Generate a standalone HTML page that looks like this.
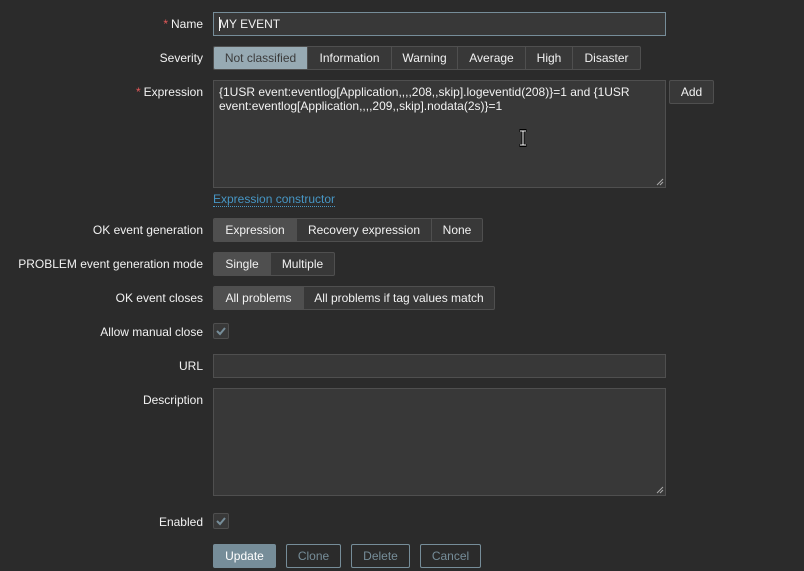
<!DOCTYPE html>
<html><head><meta charset="utf-8"><style>
*{box-sizing:border-box;margin:0;padding:0}
body{width:804px;height:571px;background:#2b2b2b;font-family:"Liberation Sans",Arial,sans-serif;font-size:12px;color:#f2f2f2;position:relative;overflow:hidden}
.l{position:absolute;right:601px;text-align:right;white-space:nowrap;line-height:14px}
.l .s{color:#e45959;margin-right:3px}
.in{position:absolute;left:213px;width:453px;background:#383838;border:1px solid #4f4f4f}
.seg{position:absolute;left:213px;height:24px;display:flex;border:1px solid #4f4f4f;border-radius:2px;background:#383838;overflow:hidden}
.seg div{height:22px;line-height:22px;text-align:center;border-left:1px solid #4f4f4f;color:#f2f2f2}
.seg div:first-child{border-left:none}
.seg .on{background:#4f4f4f}
.cb{position:absolute;left:213px;width:16px;height:16px;border:1px solid #4f4f4f;border-radius:2px;background:#383838}
.btn{position:absolute;top:544px;height:24px;line-height:22px;text-align:center;border:1px solid #768d99;border-radius:2px;color:#768d99}
</style></head><body>
<div class="l" style="top:17px"><span class="s">*</span>Name</div>
<div class="in" style="top:12px;height:24px;border-color:#768d99;padding-left:5px;line-height:22px"><span style="border-left:1px solid #f2f2f2;margin-right:-1px"></span>MY EVENT</div>

<div class="l" style="top:51px">Severity</div>
<div class="seg" style="top:46px">
<div style="width:93px;background:#97aab3;color:#3b3b3b">Not classified</div>
<div style="width:84px">Information</div>
<div style="width:66px">Warning</div>
<div style="width:68px">Average</div>
<div style="width:47px">High</div>
<div style="width:68px">Disaster</div>
</div>

<div class="l" style="top:85px"><span class="s">*</span>Expression</div>
<div class="in" style="top:80px;height:108px;padding:4px 5px;line-height:14px">{1USR event:eventlog[Application,,,,208,,skip].logeventid(208)}=1 and {1USR event:eventlog[Application,,,,209,,skip].nodata(2s)}=1
<svg style="position:absolute;right:1px;bottom:1px" width="8" height="8"><path d="M1 7L7 1M4 7L7 4" stroke="#aaa" stroke-width="1"/></svg>
</div>
<svg style="position:absolute;left:518px;top:129px" width="10" height="18"><path d="M1.5 1.5h7M1.5 16.5h7M5 1.5v15" stroke="#000" stroke-width="3"/><path d="M2 2h6M2 16h6M5 2v14" stroke="#fff" stroke-width="1"/></svg>
<div style="position:absolute;left:669px;top:80px;width:45px;height:24px;border:1px solid #4f4f4f;border-radius:2px;background:#383838;text-align:center;line-height:22px">Add</div>
<div style="position:absolute;left:213px;top:193px;color:#4796c4;border-bottom:1px dotted #4796c4;line-height:13px">Expression constructor</div>

<div class="l" style="top:223px">OK event generation</div>
<div class="seg" style="top:218px">
<div class="on" style="width:82px">Expression</div>
<div style="width:135px">Recovery expression</div>
<div style="width:51px">None</div>
</div>

<div class="l" style="top:257px">PROBLEM event generation mode</div>
<div class="seg" style="top:252px">
<div class="on" style="width:56px">Single</div>
<div style="width:64px">Multiple</div>
</div>

<div class="l" style="top:291px">OK event closes</div>
<div class="seg" style="top:286px">
<div class="on" style="width:89px">All problems</div>
<div style="width:191px">All problems if tag values match</div>
</div>

<div class="l" style="top:325px">Allow manual close</div>
<div class="cb" style="top:323px"><svg width="14" height="14"><path d="M3 7l3 3 5-6" stroke="#768d99" stroke-width="2" fill="none"/></svg></div>

<div class="l" style="top:359px">URL</div>
<div class="in" style="top:354px;height:24px"></div>

<div class="l" style="top:393px">Description</div>
<div class="in" style="top:388px;height:108px"><svg style="position:absolute;right:1px;bottom:1px" width="8" height="8"><path d="M1 7L7 1M4 7L7 4" stroke="#aaa" stroke-width="1"/></svg></div>

<div class="l" style="top:515px">Enabled</div>
<div class="cb" style="top:513px"><svg width="14" height="14"><path d="M3 7l3 3 5-6" stroke="#768d99" stroke-width="2" fill="none"/></svg></div>

<div class="btn" style="left:213px;width:63px;background:#768d99;color:#fff">Update</div>
<div class="btn" style="left:286px;width:55px">Clone</div>
<div class="btn" style="left:351px;width:59px">Delete</div>
<div class="btn" style="left:420px;width:61px">Cancel</div>
</body></html>
